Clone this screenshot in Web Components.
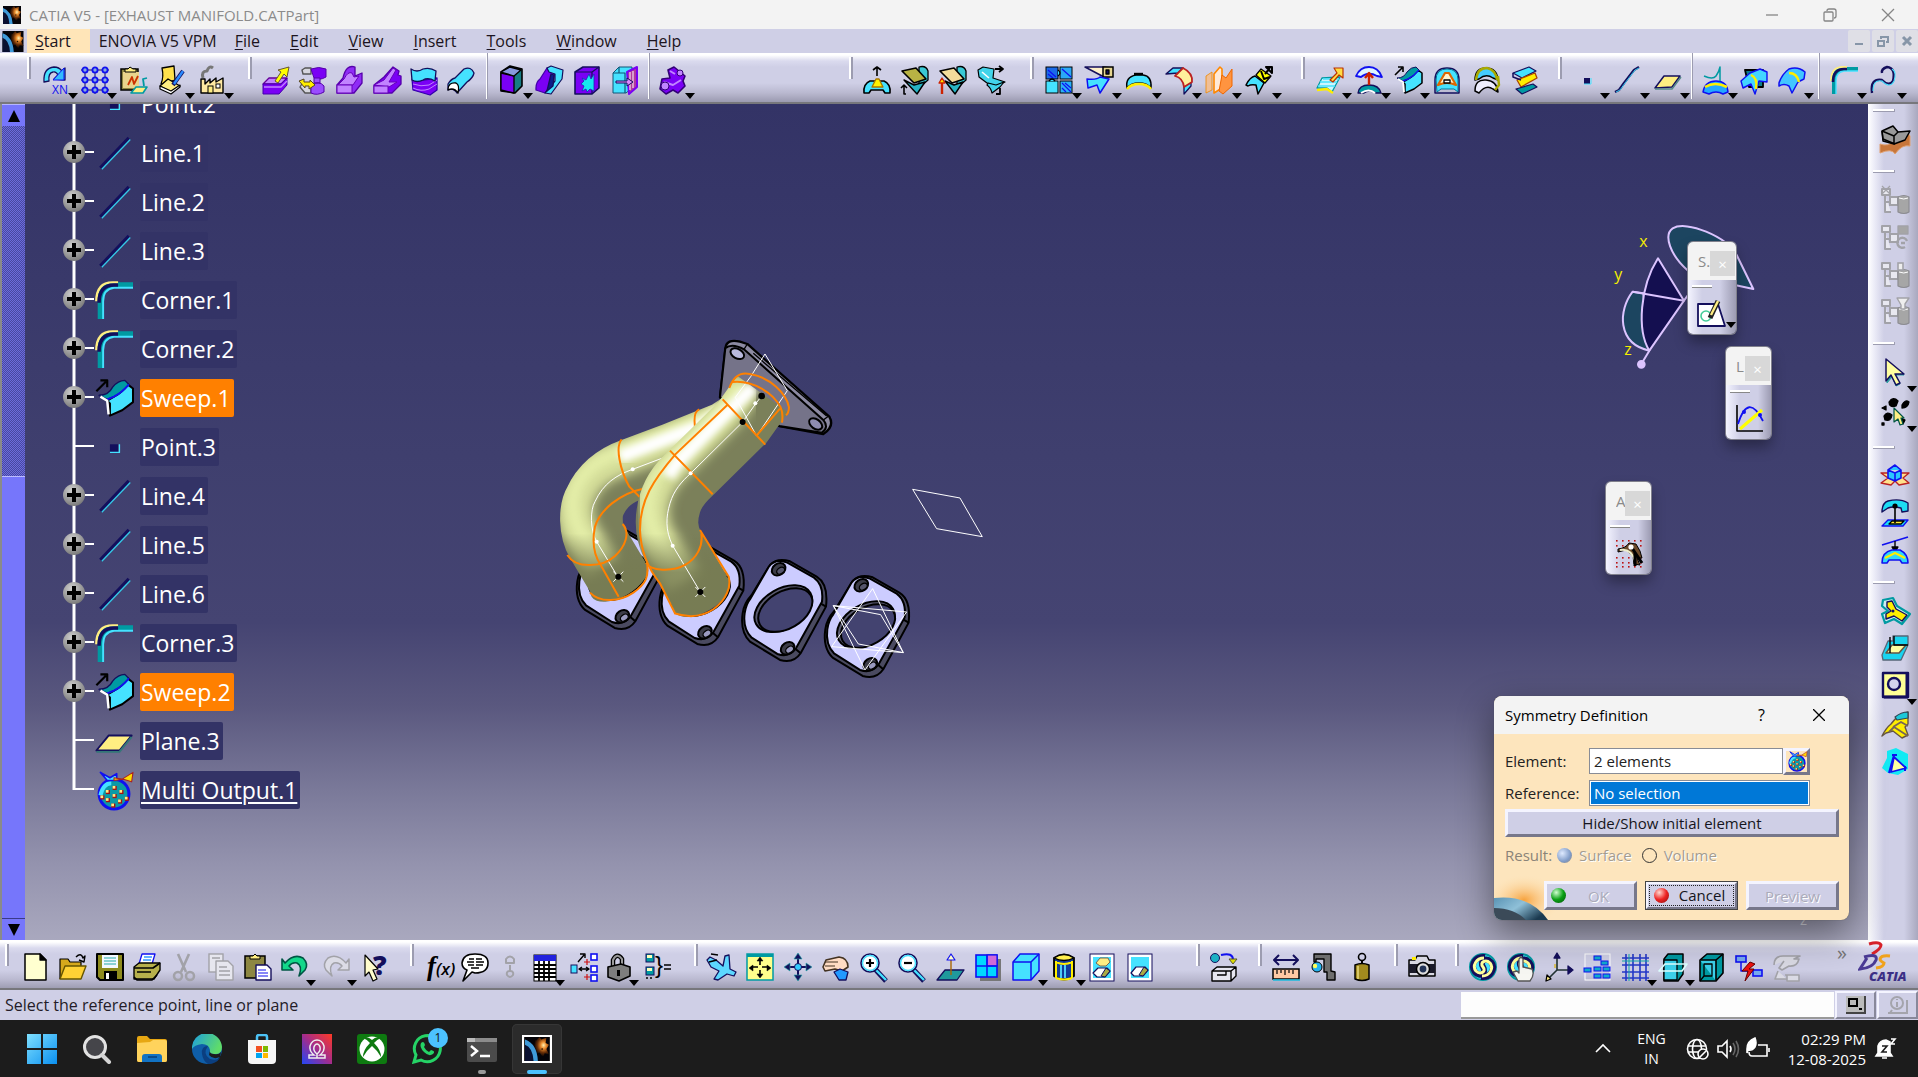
<!DOCTYPE html>
<html lang="en">
<head>
<meta charset="utf-8">
<title>CATIA V5 - [EXHAUST MANIFOLD.CATPart]</title>
<style>
  html, body { margin: 0; height: 100%; }
  body { font-family: "Open Sans", "Noto Sans", sans-serif; font-size: 15px; overflow: hidden; }
</style>
</head>
<body>
<cad-app></cad-app>
<script>
/* ---------- icon drawing helpers ---------- */
const K = '#000', N = '#140f5c', C = '#45e2ff', T = '#009aa2', P = '#7a00f5', L = '#c184ff', Y = '#ffee82', B = '#1010f0', W = '#fff', G = '#a2a2a8';
const p = (d, f = 'none', s = K, w = 1.3) => `<path d="${d}" fill="${f}" stroke="${s}" stroke-width="${w}" stroke-linejoin="round"/>`;
const c = (x, y, r, f = 'none', s = 'none', w = 1) => `<circle cx="${x}" cy="${y}" r="${r}" fill="${f}" stroke="${s}" stroke-width="${w}"/>`;
const r = (x, y, w, h, f = 'none', s = 'none', sw = 1) => `<rect x="${x}" y="${y}" width="${w}" height="${h}" fill="${f}" stroke="${s}" stroke-width="${sw}"/>`;
const t = (x, y, z, s, f = K, st = '') => `<text x="${x}" y="${y}" font-size="${z}" fill="${f}" style="${st}">${s}</text>`;
const grid = (xs, ys, fn) => xs.map(x => ys.map(y => fn(x, y)).join('')).join('');

const tree0 = p('M1 3h8v6H1zM4 9v17h6M4 16h6', '#e8e8f0', G, 2) + r(9, 11, 8, 8, '#e8e8f0', G, 2);
const drum = p('M17 11q6-3 11 0v15q-5 3-11 0z', '#a6a6a6', '#8c8c92', 1.2) + p('M18 12q5 2 9 0', 'none', W, 1);
const spiral = c(14, 14, 13, C, T, 2) + p('M14 14C10 8 17 4 22 9C27 15 22 25 12 24M14 14C18 20 11 25 6 19C1 12 6 3 16 4', 'none', N, 6) + p('M14 14C10 9 17 6 21 10C25 15 21 23 13 23M14 14C18 19 11 22 7 18C3 13 7 5 15 5', 'none', '#ffff9c', 3);
const bag = c(14, 17, 11, '#0c9aa6', B, 2.2) + p('M4 18q2-9 8-9', 'none', C, 3) + p('M4 1l7 4 5-3v5h-7z', C, B, 1.2) + p('M14 5l6 1 8-5-1 7-6-2-7 1z', '#fd0', '#a22', .8) +
  [[9,15],[14,12],[19,15],[23,20],[14,18],[9,21],[18,22],[13,25],[5,19]].map(a => r(a[0]-1, a[1]-1, 3, 3, '#a11') + r(a[0]-1, a[1]-1, 2, 2, Y)).join('');
const magnifier = p('M15 16L26 28', 'none', N, 5) + p('M16 17L26 27', 'none', C, 2.4) + c(10, 10, 9, W, N, 1.6) + c(10, 10, 7.5, 'none', C, 1.4);

const ICONS = {
  rotateN: p('M2 16Q1 2 12 1Q17 1 20 5L23 2V14L12 13L16 9Q14 5 11 6Q6 7 7 15Z', C, N) + p('M22 2v12h-11z', '#3bf', B, 1) + t(10, 28, 12, 'XN', B),
  dotgrid: p('M4 1v27M14 1v27M24 1v27M0 4h28M0 14h28M0 24h28', 'none', N, 1) + grid([4, 14, 24], [4, 14, 24], (x, y) => c(x, y, 2.6, '#8ad', B, 1.8)),
  clip: r(1, 3, 17, 21, '#8f8742', K, 1.5) + r(3, 6, 16, 16, '#e9d48c') + p('M5 6v-3h3l2-2 3 2h3v3z', Y, K, 1) + p('M8 19l4-8 2 7 4-8', 'none', '#c30', 1.8) + p('M11 27l5-6h11l-4 6z', Y, T, 1.6) + p('M27 12l-4 1 1 7', 'none', T, 1.8),
  sketchpaper: p('M3 2l12-2 1 14-14 4q3-7 1-16z', '#ffe04c', K) + p('M1 20l8-7 12 7-9 6z', Y, K) + p('M1 20v3l11 5 9-7v-2l-9 6z', W, K, 1.2) + p('M24 5L14 19', 'none', N, 4) + p('M24 5L15 18', 'none', '#2a8aff', 2.4),
  factory: p('M3 13h4v5l5-5v4l6-5v4l7-4v15H3z', '#ffe9a2', K, 1.4) + r(10, 20, 5, 7, Y, K) + r(18, 18, 4, 4, W, K) + p('M5 12q-2-7 4-7 2-6 6-3', 'none', '#777', 3),
  extrude: p('M1 18l6-6h18l-6 6z', L, '#609') + p('M1 18v10h16l8-9v-7l-6 6z', P, '#40a', 1) + p('M2 21h17l6-6', 'none', L, 1.4) + p('M13 15l6-9-3-2 11-3-2 10-3-3-6 9z', '#ff0', '#653', 1),
  revolve: p('M3 4l3-2h6v6H4zM4 16l-3 5 5 6h6v-9', '#d6d6de', '#555', 1.4) + p('M12 3q8-3 15 0v8q-7 4-12 1z', P, '#50a', 1) + p('M15 12h6v5h-6zM12 19q8-5 13 1v6q-7 4-13 1z', '#9a4cff', '#50a', 1) + p('M0 15l5-2v3h6v-2l5 5-6 4v-3H6v2z', '#fe0', '#542', 1),
  pocket: p('M1 19l6-7q3-14 12-11v9l7-3v10l-8 10H1z', '#8f2cf6', '#50a') + p('M2 19l6-6q4-8 8-6l2 4 5-1-6 9z', L, '#60b', 1) + r(1, 19, 15, 8, L, '#60b'),
  slot: p('M1 19l10-8 9-10 6 4-1 4 3 1v8l-9 9H1z', P, '#50a') + p('M1 19l10-5L20 2l3 2-7 12h8l-8 5z', L, '#60b', 1) + r(1, 20, 14, 7, L, '#60b'),
  thick: p('M2 13l5 2 20-3v12l-7 5-17-5z', P, '#30a') + p('M3 18q8 3 16 1l8-5M3 22q8 4 16 1l8-5', 'none', L, 1) + p('M1 3q6 4 12 0 7-2 13 2l-1 10q-7-4-12-1-6 3-11 0z', C, N),
  closesurf: p('M1 18q3-5 7-6L17 3q7-3 10 4-1 5-7 9L10 27q-4-6-9-3z', C, N) + p('M1 24q0-8 8-7 4 2 2 10-4-6-10-3z', W, K),
  cube: p('M4 6l9-6 12 3v17l-7 7-14-2z', '#177c84', K, 1.6) + p('M4 7l13 3v17l-13-3z', P, K) + p('M4 6l9-5 11 3-7 6z', '#89d', K),
  shell: p('M1 22q0-6 4-9L12 2l8 2-2 14-8 9-9-3z', P, '#40a') + p('M12 2l4-2 12 4-1 9-11 15-6-1 10-12V8l-6-2z', C, N, 1.2) + p('M16 8l3 1-1 11-6 5z', '#0b1e8a', N),
  thickblock: p('M2 6l8-5h16v21l-7 6H2z', P, N, 1.6) + p('M2 6h17l7-5M19 6v22', 'none', N, 1.2) + p('M9 12l4 2 3-6 2 5 3-5v17l-4-2-3 3-1-3-4 2 2-5-3-2 3-3z', '#16e6ef', '#22b', .8),
  removeface: p('M2 7l6-6h13v21l-6 5H2z', C, '#157', 1) + p('M16 6l10-5v20l-8 7z', '#b03a9a', P, 2) + p('M19 6v18M22 5v17', 'none', W, 1) + p('M2 7h12v20M8 1v6', 'none', '#157', 1.2) + p('M5 15h11v-3l6 4-6 4v-3H5z', '#d8f', N, 1),
  bool: p('M3 13l8-1-2-8 6-3 5 4 6 5-2 5 2 5-7 7-5-3-7 4-6-5z', P, '#307', 1.6) + p('M11 5l5 3M5 16l9 3 8-5', 'none', L, 2) + c(21, 7, 3, L, '#307') + c(6, 20, 4, L, '#307'),
  draft: p('M1 27q-1-9 6-12h14q7 3 6 12h-5l-2-3H8l-2 3z', C, K, 1.6) + p('M9 21l4-8h3l4 8z', '#fff200', '#a70') + p('M14 10V1M10 4l4-3 4 3', 'none', K, 1.6),
  loft1: p('M18 1q7-2 9 4v9l-9 8z', '#39c8d4', K) + p('M1 5l14-3 10 11-12 4z', '#b7b244', K, 1.6) + p('M3 14l10 5 11-3-8 12z', '#27b4c4', K, 1.4) + p('M5 28H3v-8M0 22l3-3 3 3', 'none', K, 1.6),
  loft2: p('M18 1q7-2 9 4v9l-9 8z', '#39c8d4', K) + p('M1 5l14-3 10 11-12 4z', '#f2dc9b', K, 1.6) + p('M6 15l9 4 9-3-8 12z', '#27b4c4', K, 1.4) + p('M3 28V13', 'none', '#c20', 2.4) + p('M0 17l3-5 3 5z', '#fd0', '#c20'),
  loft3: p('M1 4l5-3 11 2-1 9 12 4-9 4-9-3-8-6z', '#42d4ea', K, 1.2) + p('M11 17l8 2 8-3-4 5-8 6q-1-5-5-8z', '#42d4ea', K, 1.2) + p('M5 6l7 6', 'none', W, 1.6) + p('M18 3h7M22 0l4 3-4 3M23 22v6h-4', 'none', K, 1.8),
  join4: r(1, 1, 12, 12, '#1a6ae8', K) + r(15, 1, 12, 12, '#2aa8f6', K) + r(1, 15, 12, 12, C, K) + r(15, 15, 12, 12, '#2ab0f8', K) + p('M3 4l8 7M3 8l5 4M17 3l9 8M17 17l9 9M17 22l4 4M20 17l6 5', 'none', B, 1.2) + p('M13 4q4 3 0 6M4 15q3-4 6 0', C, K),
  trim: p('M0 1h18l9 1v8l-8 1z', '#fff0c8', N, 1.5) + r(18, 1, 10, 10, '#e6d690', K, 1.5) + p('M21 4h3v4h-3z', N, K) + p('M2 13q10 1 13-2l9 2-9 14-3-8-9 3z', C, B, 1.5),
  extract: p('M2 22q-2-11 9-13h7q9 1 8 13-4-5-12-5t-12 5z', C, K, 1.5) + p('M2 23q4-5 12-5t12 5', 'none', '#fe0', 2.6) + p('M9 8h9', 'none', K, 2.4),
  fillet: p('M1 8l7-6h10l-5 5z', C, N, 1.5) + p('M19 20v8l7-8v-4z', C, N, 1.3) + p('M13 7l5-5q10 5 9 14l-8 5q-1-9-9-11z', '#ffef9c', '#b22', 1.8),
  symm: p('M1 10l6-4v18l-6 3z', '#f0bf96', '#e80', .8) + p('M9 8l6-7 2 2v19l-8 5z', '#ffe9d6', '#f80', 1.6) + p('M17 9l4 3 6-9v17l-9 8-4-3z', '#ff9440', '#e60', 1),
  extrap: p('M1 19q4-8 9-9l9 7-6 11-2-9q-5-1-8 1z', C, K, 1.5) + p('M11 9l5-6 10 7-6 7z', '#ff0', K, 1.2) + p('M16 5l3 8 6-2M20 8l5-6M21 1h6v6z', 'none', K, 2),
  surfext: p('M6 12l18-1-8 15-5-4-10 0z', '#cdf6ff', T) + p('M4 16h17M2 20h17M7 13h16', 'none', C, 1.5) + p('M1 24l10-1 6 4', 'none', '#fe0', 2.4) + p('M14 14l7-7-3-5h9v10l-4-3-6 7z', '#fd4', '#b30', 1.2),
  offset: p('M1 10q4-9 13-9t13 10l-5-1q-9-5-16 1z', '#dff6ff', B, 1.8) + p('M3 27q1-8 11-8t12 8l-5 0q-7-4-12 0z', T, N) + p('M6 27q8-5 14 0', 'none', W, 2) + p('M14 19V8M10 12l4-5 4 5', 'none', '#c20', 2.4),
  sweep: p('M9 16L14 13Q20 10 24 4L28 7V17L20 23L11 27V18Z', C, K, 1.5) + p('M3 12Q10 12 13 6Q17 1 22 1L25 4Q20 10 14 13L9 15Z', T, N, 1) + p('M9 15L14 13Q20 10 25 4', 'none', B, 1.4) + p('M1 9l7-7M4 1h5v5', 'none', K, 1.6) + p('M4 13l5 3 1 10', 'none', W, 1.8),
  fill: p('M2 14q0-12 12-12t12 12v13H2z', 'none', N, 1.5) + p('M3 14q0-11 11-11t11 11v12l-4-3H8l-4 3z', C, '#079', 1) + p('M5 19l7-12h4l7 12q-9-4-18 0z', '#fff4cc', '#d60', 2.2) + p('M11 14h6v3h-6z', W),
  multi: p('M3 14q0-12 11-12t12 12l-5-2q-7-5-14 1z', '#4cf', K, 1.5) + p('M3 25q0-12 11-11t12 12l-5-3q-7-5-14 4z', '#eef', K, 1.5) + p('M4 14Q5 2 15 2q9 2 10 12M26 10l1 9-4 5', 'none', '#aa0', 2.4),
  blend: p('M2 7l16-6 7 4-14 7z', C, N, 1.2) + p('M6 14l18-7 2 5-16 9z', '#ffef00', '#a40', 1.3) + p('M5 23l17-5 4 3-15 7z', T, N, 1.2) + p('M2 7v4l8 3', 'none', N, 1.5),
  point: r(11, 12, 6, 6, N) + p('M18 12v6h-7', 'none', C, 1),
  line: p('M2 26L6 24L11 17L21 4L26 1', 'none', N, 2.4) + p('M3 26L7 24L12 17L22 4L26 2', 'none', '#3ce', 1),
  plane: p('M2 22l9-12h16l-8 11z', '#ffee82', N, 1.5) + p('M2 23h17l9-12', 'none', '#588', 1.5),
  parsurf: p('M1 26q2-11 13-11t12 11l-5 2q-7-4-14 0z', '#23a9ff', B, 1.5) + p('M3 21q10-6 22 0', 'none', '#fe0', 2.6) + p('M2 10q9 4 12 0t4-9v14', 'none', T, 1.5),
  projn: p('M5 4h18v17H9z', '#0a7c8a', K, 1.8) + p('M1 15l9-8 10-4 7 3v10l-8-1-4 13-4-10-8 4z', '#42d6ff', B, 1.4) + p('M11 9q7 3 5 14', 'none', '#fe0', 2.4),
  combine: p('M1 17q3-9 10-14 9-3 16 3l-1 7-6 3-6 11-3-7q-5-3-10 0z', '#42c6ff', B, 1.5) + p('M11 7q8 0 10 9', 'none', '#fe0', 2.5),
  corner: p('M4 28V14Q4 4 13 3h15', 'none', T, 4) + p('M6 28V15Q6 6 14 5h14', 'none', C, 1.4) + p('M1 15Q1 1 13 1h4', 'none', Y, 1.8) + p('M3 16Q3 3 14 3h3', 'none', N, 2.6),
  spline: p('M2 27q-2-15 10-13 7 7 11 1 3-13-6-14-6 2-5 6', 'none', N, 2.4) + p('M3 25q0-12 9-10 8 8 12 0 3-9-2-12', 'none', C, 1.1),
  newdoc: p('M3 1h15l6 6v20H3z', '#ffffd0', K, 1.5) + p('M18 1v6h6z', K, K),
  open: p('M1 26V6h8l2 3h11v5', '#d6a91c', K, 1.2) + p('M1 26l5-13h21l-5 13z', '#ffd235', '#650', 1.4) + p('M17 4q5-5 7 1l2-2-1 6-5-2', 'none', K, 1.4),
  save: p('M1 1h26v26H4l-3-3z', '#8f8c1e', K, 2) + r(6, 2, 16, 13, '#f4f8ff') + p('M8 5h12M8 8h12M8 11h12', 'none', '#2aa', 1.2) + r(8, 18, 13, 9, K) + r(10, 20, 3, 6, W),
  print: p('M9 1h13l-3 10H6z', W, B, 1.3) + p('M11 4h8M10 7h8', 'none', '#39f', 1.5) + p('M1 14l5-4h17l4 0v7l-6 9H1z', '#b6b04c', K, 1.4) + p('M1 15h19l7-5M4 19h14M1 24l3 3h15l5-5', 'none', K, 1.6),
  cut: p('M8 1l8 18M19 1l-8 18', 'none', G, 2.6) + c(8, 23, 4, 'none', G, 2.5) + c(20, 23, 4, 'none', G, 2.5),
  copy: r(2, 1, 14, 18, '#e6e6ee', G, 1.4) + p('M9 8h12l5 5v14H9z', '#e6e6ee', G, 1.4) + p('M5 5h8M12 14h8M12 18h11M12 22h11', 'none', G, 1.4),
  paste: r(1, 3, 20, 22, '#8d8742', K, 1.5) + p('M6 6v-3h3l2-2 2 2h3v3z', Y, K, 1) + p('M12 12h11l4 4v11H12z', W, N, 1.4) + p('M14 17h8M14 20h10M14 23h10', 'none', B, 1.2),
  undo: p('M1 6l3 4Q13 0 22 5q6 6 2 12l-6 6q4-10-2-13-5-1-8 3l4 4H1z', '#12d88a', '#054', 1.6),
  redo: p('M27 6l-3 4Q15 0 6 5q-6 6-2 12l6 6q-4-10 2-13 5-1 8 3l-4 4h11z', '#dcdce6', G, 1.5),
  whats: t(10, 22, 27, '?', N, 'font-weight:800') + p('M2 2l13 14-5 1 4 9-4 2-4-9-4 4z', '#fffccc', K, 1.2),
  fx: t(1, 22, 27, 'f', K, 'font-style:italic;font-family:Liberation Serif;font-weight:bold') + t(10, 22, 17, '(x)', K, 'font-style:italic;font-weight:600'),
  comment: p('M14 1q13 0 13 9 0 10-13 10l-3-1-9 9 4-11q-5-2-5-7 1-9 13-9z', W, K, 1.6) + p('M8 6h5M15 6h6M6 9h7M15 9h8M7 12h6M15 12h7M10 15h8', 'none', K, 1.5),
  link: p('M10 10V6q4-5 8 0v4zM14 12v6M14 18q-4 0-3 4 3 4 6 0 1-4-3-4', 'none', G, 2),
  table: r(3, 2, 22, 26, W, K) + r(3, 2, 22, 6, '#22d') + p('M3 12h22M3 16h22M3 20h22M3 24h22M8 8v20M13 8v20M18 8v20', 'none', K, 1.8),
  diagram: r(1, 12, 6, 8, C, N) + [1, 13, 22].map(y => r(21, y, 6, 6, W, B, 1.6)).join('') + p('M9 16h10M8 9l6-7M10 1h5v4M12 14l-3 2 3 2M16 14l3 2-3 2', 'none', K, 1.4) + p('M14 9h6M17 6v6M14 24h6M17 21v6', 'none', '#c11', 1.2),
  lock: p('M8 14V7q4-8 9-1v7', 'none', K, 4.5) + p('M8 14V7q4-8 9-1v7', 'none', '#999', 2) + p('M3 14l13-3 9 3v9l-11 5-11-4z', '#7e7e7e', K, 1.6) + r(12, 17, 3, 6, K),
  braces: r(2, 1, 8, 8, T, N) + r(2, 14, 8, 8, T, N) + r(3, 2, 5, 3, '#ffb') + r(3, 15, 5, 3, '#ffb') + t(11, 20, 24, '}', K, 'font-family:Liberation Sans') + p('M20 12h7M20 16h7', 'none', K, 1.4) + p('M2 25h2M6 25h2', 'none', K, 1.5),
  fly: p('M2 4l6 3 7 6 2-10 4-1 1 14 6 3-2 4-7-2-9 6-4-1 5-8-8-4-4-7z', '#5cd8ff', N, 1.3) + p('M3 1l7 1M1 9l8-2', 'none', K, 1.6),
  fit: r(1, 1, 26, 26, '#ffff8c', T, 1.5) + r(1, 1, 26, 3, T) + p('M14 12V6M14 17v6M12 14H5M16 14h7', 'none', K, 1.6) + p('M11 8l3-4 3 4zM11 21l3 4 3-4zM7 12l-4 3 4 3zM21 12l4 3-4 3z', K, K, .5),
  pan: p('M14 3v22M3 14h22', 'none', N, 2) + p('M10 6l4-6 4 6zM10 22l4 6 4-6zM6 10l-6 4 6 4zM22 10l6 4-6 4z', N, '#2aa', .6) + c(14, 14, 3.5, '#3cf', N),
  rotate: p('M1 14l3-7 13-3q9 1 9 10l-6 4-7-2-10 2z', '#ffdcc4', '#432', 1.6) + p('M3 9h13M3 13h10', 'none', '#432', 1.2) + p('M12 19l6-3 8 3-2 8-7 0z', '#29f', N, 1.3),
  zoomin: magnifier + p('M6 10h8M10 6v8', 'none', K, 2.2),
  zoomout: magnifier + p('M6 10h8', 'none', K, 2.2),
  normal: p('M1 27l8-10h19l-7 10z', '#1f9a9c', N, 1.3) + p('M15 22V6', 'none', '#a60', 1.4) + p('M11 7l4-6 4 6z', '#ffc', B, 1.2),
  views: r(6, 6, 21, 22, '#777') + r(2, 2, 21, 22, '#00d8ff', B, 1.6) + r(13, 2, 10, 11, '#d06ad8', B, 1.2) + p('M13 2v22M2 13h21', 'none', B, 1.5),
  iso: p('M1 9l7-8h19v17l-8 9H1z', C, B, 1.5) + p('M1 9h18v18M19 9l8-8', 'none', B, 1.5),
  shade: p('M4 5q10-7 20 0v18q-10 7-20 0z', '#123a9a', K, 1.8) + p('M4 5q10-7 20 0-10 5-20 0z', '#ffef4d', K) + p('M6 8v17M22 8v17M6 25q8 3 16 0M6 9q8 4 16 0', 'none', '#fe0', 2) + p('M11 12v13M15 12v13', 'none', '#5df', 1.8),
  hide: r(2, 1, 24, 27, W, N) + r(5, 4, 18, 21, C) + p('M8 10l4-5h8l2 4-4 4h-6z', Y, '#765', 1) + p('M5 20l5-5h9l3 3-5 6h-8z', W, N, 1.2) + p('M13 23l5-8 4 3-5 6z', '#aa4', N, 1),
  swap: r(2, 1, 24, 27, W, N) + r(5, 4, 18, 21, C) + p('M5 20l5-6h9l3 3-5 6H8z', W, N, 1.2) + p('M13 22l5-8 4 3-5 6z', '#aa4', N, 1),
  tobox: c(5, 5, 4.5, '#1bb0c4', N) + p('M11 2q12-3 12 5', 'none', B, 2) + p('M19 6h8l-4 5z', '#dd0', '#553', 1) + p('M2 18l5-4h19v9l-5 5H2zM2 18h19v10M21 18l5-4M7 22h9v-4', '#e6e6f0', K, 1.4),
  ruler: p('M3 7h22M7 2L2 7l5 5M21 2l5 5-5 5', 'none', N, 2) + r(1, 16, 26, 10, '#ffc9a4', K, 1.5) + p('M5 17v4M9 17v3M13 17v5M17 17v3M21 17v4', 'none', K, 1.2) + p('M1 27h27', 'none', '#2bd', 1.6),
  caliper: p('M4 1h17v17l4 1v8h-8v-8h-3V6h-8v3H4z', '#6e6e6e', K, 1.4) + c(7, 14, 5, '#25b4f0', K) + c(5, 13, 2.2, '#ff5'),
  weight: c(14, 4, 3.5, 'none', K, 1.6) + r(13, 7, 2, 4, K) + p('M7 12q7-3 14 0v14q-7 3-14 0z', '#a28b1e', K, 1.5) + p('M10 13v13', 'none', '#d8c766', 2),
  camera: p('M1 7h6l2-4h10l2 4h6v16H1z', '#d8d8e2', K, 1.5) + r(1, 11, 26, 9, '#1a1a28') + c(15, 16, 6.5, '#ddd', K, 1.5) + c(15, 16, 3.4, '#235') + r(4, 4, 4, 3, '#fe0'),
  update: spiral,
  manual: spiral + p('M11 28l-5-9 4-1 2 2V6q2-3 4 0v8l9 2q3 6-2 12z', '#f6f6f2', '#555', 1.3),
  axis: p('M12 17V3M12 17h13M12 17L3 26', 'none', '#233', 1.6) + p('M9 5l3-5 3 5zM23 13l5 4-5 4z', N, N) + p('M1 28l1-6 4 4z', Y, K) + p('M10 15v-4', 'none', '#db3', 1.5),
  works: r(2, 1, 25, 26, 'none', W, 1) + [[11, 3], [18, 8], [1, 15], [11, 14], [20, 14], [11, 21], [20, 21]].map(a => r(a[0], a[1], 7, 4, '#1ac', B)).join(''),
  snap: p('M5 1v27M12 1v27M19 1v27M25 1v27M1 5h27M1 12h27M1 19h27M1 25h27', 'none', '#2438c8', 1.6) + p('M8 1v27M1 8h27', 'none', '#1aa', 1),
  section: p('M5 6l4-5h15v20l-5 7H5z', T, K, 1.5) + p('M5 7h13v20H5z', '#3cd0ea', K) + p('M0 18l6-7h22l-5 7z', 'none', '#dff', 1.6),
  wirebox: p('M3 7l7-6h16v19l-7 8H3z', T, K, 1.6) + p('M3 7h16v21M19 7l7-6', '#3cd0ea', K, 1.6) + p('M7 11h8v12H7zM3 28l4-5', 'none', K, 1.3),
  pwrcut: r(1, 3, 10, 6, '#7ae', B, 1.6) + r(18, 17, 9, 6, '#7ae', B, 1.6) + p('M6 9v9h11', 'none', B, 1.5) + p('M15 9l-8 9h6l-3 10 9-12h-5l6-5z', '#e11', '#600', 1),
  handopen: p('M1 12q0-9 9-9h17l-6 3h5q-2 8-10 7l-7 4-3-2 5-7M5 18l-3 8h12M12 22h14v6H14v-6', '#dadae4', G, 1.6),
  wing: p('M-1 19q8 3 14-3l14-8 2 3v10q-8-2-15 8-3-6-15-1z', '#c8763a', '#e0a070', 1) + p('M1 6l11-5 5 6 12-1-5 9-11 4-11-3z', '#9a9a9a', K, 1.5) + p('M1 6l1 8 12 5M1 6l12 5 4-4M13 11v7', 'none', K, 1.5),
  t1: tree0 + drum + p('M1 0l8 8M9 0l-8 8', 'none', G, 1.2), t2: tree0 + p('M17 3h10v8H17z', '#a6a6a6', G) + p('M26 18a5 5 0 1 0-2 6M20 20h4', 'none', G, 2.4),
  t3: tree0 + drum + r(17, 3, 5, 7, '#eee', G, 1.6), t4: tree0 + drum + p('M16 1h12l-4 6v5h-4V8z', '#eee', G, 1.4),
  cursor: p('M6 3v22l5-6 4 9 4-2-4-9h8z', '#2aa0a0', '#2aa0a0', 1) + p('M5 1v22l5-6 5 10 4-2-5-9h9z', '#ffffa0', N, 1.5),
  lasso: p('M8 4q4-6 9-1l-2 5q-7 2-7-4zM21 7q3-6 7-3-1 6-7 6zM3 18q3-5 8-1-1 7-7 5zM1 10l4-2v4zM20 20l4 2-2 4zM1 25h2v2H1z', K, K) + p('M13 10v14l4-3 2 6 3-1-2-6h3z', Y, '#054', 1.2),
  assy: p('M0 11h28l-6 5 6 5-10 2-4-4-4 4-10-2 7-5z', '#ffe18c', '#b22', 1.4) + p('M7 8l7-5 6 5v8l-6 3-7-3zM7 8l7 3 6-3M14 11v8', '#2bc6ff', B, 1.6),
  thickarrow: p('M1 13q0-9 6-11 12-3 20 2v8l-6 1-1-4q-8-2-13 0z', '#1cdcf4', N, 1.4) + p('M1 27l6-6h20l-5 6z', '#1cdcf4', B, 1.4) + p('M8 25l3-3h12l-3 3z', '#fe3') + p('M14 6v18', 'none', K, 1.6) + c(14, 7, 2.6, K),
  proj2: p('M1 9L27 1', 'none', B, 1.8) + p('M14 5v10', 'none', K, 1.4) + p('M11 11l3 5 3-5z', K, K) + p('M1 27q0-11 10-13h8q8 4 8 13H21l-2-3H8l-2 3z', '#30d8f8', B, 1.5) + p('M4 22l10-5 10 5', 'none', '#fe0', 2),
  nest: p('M2 3l10-2 4 8 13 8-8 10-8-5-9 4-3-9 6-3-6-5z', '#cdeff4', T, 2.2) + p('M6 5l5-1 4 8 11 6-5 6-8-5-8 3v-5l5-3-4-4z', '#ffef00', N, 1.4) + c(12, 14, 1.5, N),
  box3: p('M1 21l6-14h5V2h15v9l-7 15H2z', '#18d4f0', '#567', 1.3) + p('M5 19l6-8h14l-7 8z', '#ffffa0', '#654', 1.5) + p('M9 3v16M27 11H13V2', 'none', K, 1.4),
  hole: p('M2 2h25v24H2z', '#ffff96', N, 2.4) + p('M26 3v22M3 26h24', 'none', N, 3) + c(13, 13, 6, '#d4d4ee', N, 2.4),
  pat: p('M1 25q4-8 9-12 6-9 17-12v12l-3 3 3 8-6 3-9-7-7 2z', '#ffef00', '#654', 1.4) + p('M14 6q6-5 13-5v6l-11 2z', '#1cc8d8', '#345', 1.2) + p('M12 16l8-5 7 4M8 21l5-5 14 9', 'none', '#765', 1.8),
  tri: p('M1 20l5-10V3l9-3 12 6v15l-10 6-10-2z', '#12eaf4', 'none') + p('M13 9l12 11-15 4z', '#ffffa0', B, 1.8) + p('M13 7L8 25M11 7h5M24 18v5', 'none', B, 2),
  pad: p('M1 5h20l7 22H1z', W, N, 1.8) + c(9, 17, 5, 'none', '#4c9', 1.6) + p('M21 2L13 19', 'none', '#222', 5) + p('M21 2l-7 14', 'none', Y, 2.4),
  law: p('M2 1v26h26', 'none', K, 1.6) + p('M3 20Q13-12 28 17', 'none', B, 1.8) + p('M5 25L27 6', 'none', '#ff0', 3) + c(9, 8, 2, B) + c(25, 11, 2, B),
  apply: grid([1, 7, 13, 19, 25], [1, 6, 18, 23, 27], (x, y) => r(x, y, 1.6, 1.6, '#b11')) + p('M3 10q8-1 11-6l7 1 4 7 2 7-5 0 3 7-6-1-1-8-7-6-8 2z', '#6b4a2a', K, 1) + p('M5 11q11-2 15 11', 'none', '#eec', 2) + p('M17 9l10 15M20 13v14', 'none', K, 3) + c(16, 8, 2.6, W),
  bag,
  treeline: p('M4 25L25 3', 'none', N, 2.6) + p('M5 26L26 4', 'none', '#35c9e6', 1),
  treeplane: p('M1 21l9-11h17l-9 11z', Y, N, 1.4) + p('M1 22h17l9-11', 'none', '#377', 1.4)
};

const LOGO = `<svg viewBox="0 0 28 28" width="100%" height="100%"><defs><radialGradient id="s" cx=".68" cy=".4" r=".55"><stop offset="0" stop-color="#fff1b0"/><stop offset=".3" stop-color="#e98a2c"/><stop offset=".65" stop-color="#6a3008"/><stop offset="1" stop-color="#080304"/></radialGradient></defs><rect width="28" height="28" fill="#040308"/><path d="M10 0l3 4 4-4 2 3 6-2-1 6 4 2-3 5 3 6-5-1-2 5-4-6-5 2-4-10z" fill="url(#s)"/><path d="M0 3Q14 8 15 28H0z" fill="#0a1030"/><path d="M0 3Q14 8 15 28h-5Q9 12 0 9z" fill="#3f9ad8"/><circle cx="20" cy="14" r="1" fill="#210"/></svg>`;

const define = (name, html, setup) => customElements.define(name, class extends HTMLElement {
  connectedCallback() {
    if (this.shadowRoot) return;
    const tpl = document.createElement('template');
    tpl.innerHTML = typeof html === 'function' ? html(this) : html;
    this.attachShadow({ mode: 'open' }).append(tpl.content.cloneNode(true));
    if (setup) setup(this, this.shadowRoot);
  }
});

/* ---------- small parts ---------- */
define('cad-icon', el => `<style>:host{display:block;width:28px;height:28px}svg{display:block;width:100%;height:100%;overflow:visible}text{font-family:"Open Sans",sans-serif}</style>
  ${el.getAttribute('name') === 'logo' ? LOGO : `<svg viewBox="0 0 28 28">${ICONS[el.getAttribute('name')] || ''}</svg>`}`);

define('tool-button', el => `<style>
  :host{display:block;flex:none;width:var(--cell,38px);height:var(--cellh,48px)}
  :host([drop]){margin:var(--dropm,0)}
  button{position:relative;box-sizing:border-box;width:100%;height:100%;padding:var(--padt,5px) 0 0;border:0;background:none;display:grid;place-items:center}
  i{position:absolute;right:-3px;bottom:var(--dropb,2px);border:5px solid transparent;border-top:6px solid #000;border-bottom:0}
  </style><button type="button" aria-label="${el.getAttribute('icon')}"><cad-icon name="${el.getAttribute('icon')}"></cad-icon>${el.hasAttribute('drop') ? '<i></i>' : ''}</button>`);

define('tool-group', el => `<style>
  :host{display:flex;min-width:0;flex:${el.getAttribute('span')} 1 0;--cell:${el.getAttribute('cell') || 38}px}
  span{flex:none;width:2px;height:22px;margin:4px 5px 0 0;background:#fff;border-right:2px solid #9c9cb0}
  :host([thin]) span{width:1px;border-width:1px;height:46px;margin:0 4px 0 0}
  :host([extra]){--dropm:0 4px 0 0}
  :host([extra]) span{margin-right:8px}
  </style><span></span><slot></slot>`);

define('tool-bar', `<style>
  :host{display:flex;box-sizing:border-box;height:51px;border-bottom:2px solid #77777c;overflow:hidden;
    background:linear-gradient(#fff 0,#fff 2px,#dadaee 8px,#cfcfe6 14px,#cfcfe6 30px,#b9b8cf 40px,#9b9ab0 49px)}
  </style><slot></slot>`);

define('side-group', `<style>:host{display:block;padding-bottom:14px;--cell:38px;--cellh:37px;--dropm:0 0 3px;--dropb:-3px;--padt:3px}
  span{display:block;width:21px;height:2px;background:#fff;border-bottom:1px solid #9c9cb0;border-right:1px solid #9c9cb0;margin-bottom:7px}
  ::slotted(*){margin-left:3px!important}</style><span></span><slot></slot>`);

define('side-bar', `<style>:host{display:block;width:45px;padding:5px 0 0 5px;height:100%;box-sizing:border-box;
  background:linear-gradient(90deg,#fff 0,#ededf8 6px,#cfcfe6 16px,#cfcfe6 36px,#a9a8be 50px)}</style><slot></slot>`);

/* ---------- title and menu ---------- */
define('title-bar', `<style>
  :host{display:flex;align-items:center;height:29px;background:#f3f3f3;color:#8b8b8b}
  cad-icon{width:18px;height:18px;margin:0 8px 0 3px}
  h1{font:inherit;margin:0;flex:1}
  button{width:58px;height:29px;border:0;background:none;padding:0 2px 0 0;display:grid;place-items:center}
  svg{width:14px;height:14px;fill:none;stroke:#858585;stroke-width:1.3px}
  </style><cad-icon name="logo"></cad-icon><h1>CATIA V5 - [EXHAUST MANIFOLD.CATPart]</h1>
  <button aria-label="Minimize"><svg viewBox="0 0 14 14"><path d="M1 7h12"/></svg></button>
  <button aria-label="Restore"><svg viewBox="0 0 14 14"><rect x="1" y="4" width="9" height="9" rx="1"/><path d="M4 3q0-2 2-2h5q2 0 2 2v5q0 2-2 2"/></svg></button>
  <button aria-label="Close"><svg viewBox="0 0 14 14"><path d="M1 1l12 12M13 1L1 13"/></svg></button>`);

define('menu-bar', `<style>
  :host{display:flex;align-items:stretch;height:24px;background:#cfcfe6;color:#1c1420}
  cad-icon{width:24px;height:21px;margin:2px 2px 0 1px}
  button{font:16px/24px "Open Sans","Noto Sans",sans-serif;color:inherit;border:0;background:none;padding:0 15px;white-space:nowrap}
  .start{background:#ffe5b8;padding:0 19px 0 8px}.eno{padding:0 3px 0 9px}
  u{text-underline-offset:2px}
  .sp{flex:1}
  .mdi{width:22px;margin:1px 0 1px 2px;padding:0;background:#dfdfe6;border-radius:2px;display:grid;place-items:center}
  svg{width:12px;height:12px;fill:none;stroke:#8796a8;stroke-width:2px}
  </style><cad-icon name="logo"></cad-icon>
  <button class="start"><u>S</u>tart</button><button class="eno">ENOVIA V5 VPM</button>
  <button><u>F</u>ile</button><button><u>E</u>dit</button><button><u>V</u>iew</button><button><u>I</u>nsert</button><button><u>T</u>ools</button><button><u>W</u>indow</button><button><u>H</u>elp</button>
  <span class="sp"></span>
  <button class="mdi" aria-label="Minimize document"><svg viewBox="0 0 12 12"><path d="M2 9h8"/></svg></button>
  <button class="mdi" aria-label="Restore document"><svg viewBox="0 0 12 12"><path d="M1 6h6v5H1zM4 4V2h7v5H9"/></svg></button>
  <button class="mdi" aria-label="Close document"><svg viewBox="0 0 12 12"><path d="M2 2l8 8M10 2l-8 8" stroke-width="3"/></svg></button>`);

/* ---------- specification tree ---------- */
define('scroll-rail', `<style>
  :host{display:flex;flex-direction:column;width:23px;border-left:2px solid #8a8a8a;background:#7676fb}
  button{height:22px;padding:0;border:0;border-top:1px solid #b5b5ff;background:#7676fb;display:grid;place-items:center}
  .dn{border-top-color:#3a3a88}
  svg{width:14px;height:12px}
  .track{flex:350;background:repeating-conic-gradient(#4848a0 0 25%,#6c6cdc 0 50%) 0 0/2px 2px}
  .thumb{flex:442;border-top:1px solid #bcbcff}
  </style><button aria-label="Scroll up"><svg viewBox="0 0 14 12"><path d="M7 0l6 12H1z"/></svg></button>
  <div class="track"></div><div class="thumb"></div>
  <button class="dn" aria-label="Scroll down"><svg viewBox="0 0 14 12"><path d="M7 12l6-12H1z"/></svg></button>`);

define('tree-node', el => {
  const plus = el.hasAttribute('plus'), last = el.hasAttribute('last');
  return `<style>
  :host{display:flex;align-items:center;height:49px;color:#fff}
  svg{flex:none;width:32px;height:49px;display:block}
  cad-icon{width:38px;height:38px;flex:none}
  .lb{line-height:38px;height:38px;padding:0 3px 0 1px;margin-left:7px;border-radius:2px;background:#333366;font-size:23px;white-space:nowrap}
  :host([hot]) .lb{background:#ff8000}
  :host([last]) .lb{text-decoration:underline;text-decoration-thickness:2px;text-underline-offset:3px}
  </style><svg viewBox="0 0 32 49"><defs><radialGradient id="g" cx=".4" cy=".3" r=".8"><stop offset="0" stop-color="#d0d0d0"/><stop offset="1" stop-color="#707070"/></radialGradient></defs>
  <path d="M11 0v${last ? 25 : 49}" stroke="#fff" stroke-width="3"/><path d="M11 24h20" stroke="#fff" stroke-width="2"/>
  ${plus ? '<circle cx="11" cy="24" r="11" fill="url(#g)"/><path d="M11 17v14M4 24h14" stroke="#000" stroke-width="4"/>' : ''}</svg>
  <cad-icon name="${el.getAttribute('icon')}"></cad-icon><span class="lb"><slot></slot></span>`;
});

define('spec-tree', `<style>:host{display:block;padding-left:38px;margin-top:-25px;position:relative}</style>
  <tree-node icon="point">Point.2</tree-node>
  <tree-node icon="treeline" plus>Line.1</tree-node><tree-node icon="treeline" plus>Line.2</tree-node><tree-node icon="treeline" plus>Line.3</tree-node>
  <tree-node icon="corner" plus>Corner.1</tree-node><tree-node icon="corner" plus>Corner.2</tree-node>
  <tree-node icon="sweep" plus hot>Sweep.1</tree-node><tree-node icon="point">Point.3</tree-node>
  <tree-node icon="treeline" plus>Line.4</tree-node><tree-node icon="treeline" plus>Line.5</tree-node><tree-node icon="treeline" plus>Line.6</tree-node>
  <tree-node icon="corner" plus>Corner.3</tree-node><tree-node icon="sweep" plus hot>Sweep.2</tree-node>
  <tree-node icon="treeplane">Plane.3</tree-node><tree-node icon="bag" last>Multi Output.1</tree-node>`);

/* ---------- 3D scene ---------- */
const backC = 'M236 775L170 665C150 630 150 570 165 545C190 490 230 465 278 448L400 402L560 338L608 306';
const frontC = 'M481 816L398 677C375 630 378 590 390 550C402 510 425 485 452 460L608 306L668 222';
const pipe = (id, d, hi, end) => `
  <mask id="${id}" maskUnits="userSpaceOnUse" x="0" y="0" width="1380" height="1110"><path d="${d}" fill="none" stroke="#fff" stroke-width="188"/>${end.replace('FILL', '#fff')}</mask>
  <g mask="url(#${id})"><rect width="1380" height="1110" fill="#7b805a"/>
  <path d="${d}" transform="translate(-50 -30)" fill="none" stroke="#d3dc98" stroke-width="112" filter="url(#b1)"/>
  <path d="${d}" transform="translate(-56 -44)" fill="none" stroke="#f0fbb4" stroke-width="36" filter="url(#b1)" opacity=".7"/>
  <path d="${hi}" fill="none" stroke="#ffffff" stroke-width="40" filter="url(#b2)"/>
  <rect x="0" y="640" width="1380" height="470" fill="url(#dk)"/></g>`;
const star = (x, y) => `<path d="M${x-15} ${y-15}l30 30M${x+15} ${y-15}l-30 30" stroke="#fff" stroke-width="3"/><circle cx="${x}" cy="${y}" r="9"/>`;

define('model-view', `<style>:host{display:block;min-height:0}svg{display:block;width:100%;height:100%}text{font-family:"Open Sans",sans-serif}</style>
<svg viewBox="25 104 1843 836" role="img" aria-label="Exhaust manifold">
 <defs>
  <filter id="b1"><feGaussianBlur stdDeviation="16"/></filter><filter id="b2"><feGaussianBlur stdDeviation="10"/></filter>
  <linearGradient id="dk" x2="0" y2="1"><stop offset="0" stop-color="#6f744e" stop-opacity="0"/><stop offset=".25" stop-color="#767b52" stop-opacity=".8"/></linearGradient>
  <g id="flange" stroke="#000" stroke-width="6" stroke-linejoin="round">
   <path d="M690 735Q712 712 750 724L830 770Q866 792 858 860L782 1000Q760 1032 720 1020L630 965Q600 935 608 880Q612 850 635 825Z" fill="#4a4a60"/>
   <path d="M686 741Q706 714 742 728L822 773Q852 795 846 845L768 985Q748 1014 712 1002L634 952Q608 925 614 880Q618 852 632 835Z" fill="#ccccff"/>
   <path d="M858 860l-14-8M782 1000l-16-14" fill="none"/>
   <ellipse cx="730" cy="866" rx="94" ry="60" transform="rotate(-30 730 866)" fill="#5a5a70"/>
   <ellipse cx="736" cy="870" rx="88" ry="56" transform="rotate(-30 736 870)" fill="#434370"/>
   <ellipse cx="716" cy="748" rx="22" ry="17" transform="rotate(-35 716 748)" fill="#3c3c48"/><ellipse cx="722" cy="752" rx="13" ry="9" transform="rotate(-35 722 752)" fill="#55556c" stroke-width="4"/>
   <ellipse cx="743" cy="985" rx="22" ry="17" transform="rotate(-35 743 985)" fill="#3c3c48"/><ellipse cx="749" cy="989" rx="13" ry="9" transform="rotate(-35 749 989)" fill="#9a9ac0" stroke-width="4"/>
  </g>
 </defs>
 <g transform="translate(540 320) scale(.3333)">
  <path d="M556 85Q560 55 600 65L622 72L868 290Q885 320 850 342L718 318L540 232Z" fill="#8c8aa2" stroke="#000" stroke-width="7" stroke-linejoin="round"/>
  <path d="M556 85Q575 68 612 88L850 300Q868 322 846 338L718 318L540 232Z" fill="#757389" stroke="#000" stroke-width="6"/>
  <path d="M612 88l10-16M850 300l16-12M640 100L860 288" stroke="#000" stroke-width="4" fill="none"/>
  <ellipse cx="592" cy="101" rx="22" ry="14" transform="rotate(28 592 101)" fill="#b9b9dd" stroke="#000" stroke-width="6"/>
  <ellipse cx="827" cy="312" rx="22" ry="14" transform="rotate(35 827 312)" fill="#8e8cb0" stroke="#000" stroke-width="6"/>
  <use href="#flange" x="-496" y="-96"/><use href="#flange" x="-248" y="-48"/><use href="#flange"/><use href="#flange" x="248" y="48"/>
  ${pipe('m1', backC, 'M240 410L330 376L480 318L600 240', '<ellipse cx="238" cy="782" rx="96" ry="48" transform="rotate(-30 238 782)" fill="FILL"/>')}
  <g fill="none" stroke="#fff" stroke-width="3"><path d="${backC}"/></g>
  <g fill="none" stroke="#ff8000" stroke-width="6">
   <path d="M245 358C225 380 240 450 268 500L300 532M478 268C458 275 462 310 468 342M310 506C240 520 180 570 165 620C155 670 165 710 182 735L236 830M248 612C272 640 255 680 225 708C190 740 110 750 82 705M150 818C180 850 240 845 280 818C320 790 325 770 322 735"/></g>
  ${star(235, 770)}
  ${pipe('m2', frontC, 'M385 470Q405 430 450 390L560 280L640 200', '<ellipse cx="484" cy="826" rx="96" ry="50" transform="rotate(-30 484 826)" fill="FILL"/>')}
  <g fill="none" stroke="#fff" stroke-width="3"><path d="M481 816L398 677C375 630 378 590 390 550C402 510 425 485 452 460L608 306L648 250L665 228"/>
   <path d="M675 102L632 170L586 232L650 348L742 212ZM1118 508L1260 534L1327 650L1190 626ZM880 857L1100 876L975 1050ZM998 806L1090 998L875 980ZM1022 884L880 857L955 972L1090 998Z"/></g>
  <g fill="none" stroke="#ff8000" stroke-width="6">
   <path d="M578 186C640 180 700 220 722 262C730 280 728 295 726 308M568 204C580 170 600 155 630 162C690 172 740 220 747 262Q746 280 738 286M548 238L676 374M562 255L406 403C340 480 300 540 300 630C302 690 320 740 360 790L405 880M390 392L518 523M720 266L652 344M484 640C490 680 470 715 435 735C400 755 330 755 318 728M480 630L566 770C574 800 560 840 520 868C480 895 440 892 403 880"/></g>
  ${star(481, 816)}<circle cx="665" cy="228" r="10"/><circle cx="608" cy="306" r="9"/>
  <g fill="#fff"><circle cx="398" cy="677" r="6"/><circle cx="170" cy="665" r="6"/><circle cx="278" cy="448" r="6"/><circle cx="452" cy="460" r="6"/><circle cx="646" cy="250" r="6"/></g>
 </g>
 <g transform="translate(1580 200) scale(.3333)" stroke="#dcc4ff" stroke-width="6" stroke-linejoin="round">
  <path d="M324 212C270 165 250 105 278 85C320 60 440 110 470 165L520 267L468 256Z" fill="#1c4560"/>
  <path d="M158 275C115 330 110 430 208 452L190 280Z" fill="#1c4560"/>
  <path d="M234 175C180 260 170 390 208 452L312 302Z" fill="#140f50"/>
  <path d="M158 275L312 302L324 285M208 452L184 492" fill="none"/><circle cx="184" cy="493" r="10" fill="#dcc4ff"/>
  <g fill="#f6ee00" stroke="none" font-size="48"><text x="178" y="141">x</text><text x="103" y="240">y</text><text x="133" y="466">z</text></g>
 </g>
 <text x="1800" y="925" font-size="15" fill="#e0e0ea">z</text>
</svg>`);

define('float-bar', el => `<style>
  :host{display:block;width:45px;border-radius:5px;overflow:hidden;box-shadow:0 0 0 1px #80808c,0 8px 14px rgba(0,0,0,.35);--cell:45px;--cellh:46px;--dropb:1px;--padt:13px}
  header{display:flex;height:38px;background:#f3f3f3;color:#8a8a8a;overflow:hidden;box-sizing:border-box;padding:9px 1px 0 10px}
  b{font-weight:400;flex:1;overflow:hidden;line-height:20px}
  header button{flex:none;width:25px;height:25px;padding:0;border:0;background:#d8d8d8;color:#fff;font:inherit;line-height:20px}
  .bd{height:54px;background:linear-gradient(90deg,#f4f4ff,#cfcfe6 14px,#cfcfe6 32px,#9c9bb2)}
  .bd i{display:block;width:20px;height:2px;margin:0 0 0 4px;background:#fff;border-bottom:1px solid #888;position:relative;top:5px}
  </style><header><b>${el.getAttribute('label')}</b><button aria-label="Close">×</button></header>
  <div class="bd"><i></i><slot></slot></div>`);

/* ---------- dialog ---------- */
define('symmetry-dialog', `<style>
  :host{display:block;width:355px;border-radius:8px;overflow:hidden;background:#fde5bd;color:#222;box-shadow:0 14px 36px rgba(0,0,0,.45),0 0 1px #555}
  header{height:38px;display:flex;align-items:center;background:#f3f3f3;padding:0 2px 0 11px;color:#000}
  h2{font:inherit;margin:0;flex:1}
  header button{width:57px;height:38px;border:0;padding:0;background:none;font:16px "Open Sans",sans-serif}
  header svg{width:12px;height:12px;stroke:#000;stroke-width:1.3px}
  form{padding:14px 10px 10px 11px;display:flex;flex-direction:column;position:relative}
  .row{display:flex;height:26px;align-items:center;margin-bottom:6px}
  .row label{width:84px}
  input[type=text]{box-sizing:border-box;height:26px;width:194px;min-width:0;border:2px solid #fff;outline:1px solid #888c96;outline-offset:-1px;padding:0 3px;font:inherit;background:#fff;color:#222}
  input.ref{width:221px;background:#0078d7;color:#fff}
  form .pick{width:27px;height:27px;padding:0;display:grid;place-items:center;background:#fde5bd}
  .pick cad-icon{width:20px;height:20px}
  form button{box-sizing:border-box;font:inherit;color:#151520;background:#cfcfe6;border:3px solid;border-color:#f4f4ff #77778a #77778a #f4f4ff}
  .wide{height:28px;line-height:20px;padding:0;margin-top:-3px}
  fieldset{border:0;margin:0;padding:8px 0 0;display:flex;align-items:center;height:30px;color:#a39c90;text-shadow:1px 1px #fff}
  .res{color:#8a8378;text-shadow:none;margin-right:5px}
  input[type=radio]{appearance:none;width:15px;height:15px;margin:0 7px 0 0;border:1px solid #333;border-radius:50%}
  input[type=radio]:checked{border:0;background:radial-gradient(circle at 35% 35%,#dfeaff,#7f9bc8 60%,#a08c70)}
  fieldset label{margin-right:10px}
  .act{display:flex;gap:8px;justify-content:flex-end;margin-top:6px}
  .act button{width:93px;height:29px;display:flex;align-items:center;justify-content:center;padding:0;position:relative;z-index:1}
  .act .ok{justify-content:flex-start;padding-left:4px}
  .act button:disabled{color:#ababba;text-shadow:1px 1px #fff}
  .ball{width:15px;height:15px;border-radius:50%;margin-right:22px;background:radial-gradient(circle at 35% 30%,#d0ffd0,#0aa015 50%,#045008)}
  .red{margin-right:10px;background:radial-gradient(circle at 35% 30%,#ffd8d0,#e22 50%,#801010)}
  .cancel{outline:1px solid #444;outline-offset:-1px}
  .cancel span{display:flex;align-items:center;border:1px dotted #222;padding:0 8px 0 4px;line-height:19px}
  .planet{position:absolute;left:0;bottom:0;width:70px;height:50px}
  </style>
  <header><h2>Symmetry Definition</h2><button aria-label="Help">?</button><button aria-label="Close"><svg viewBox="0 0 12 12"><path d="M0 0l12 12M12 0L0 12"/></svg></button></header>
  <form>
   <svg class="planet" viewBox="0 0 70 50"><defs><radialGradient id="o"><stop offset="0" stop-color="#f7a23c"/><stop offset="1" stop-color="#fde5bd" stop-opacity="0"/></radialGradient><linearGradient id="e" x1="0" y1="0" x2="1" y2=".6"><stop offset="0" stop-color="#5a93b4"/><stop offset=".5" stop-color="#8fc0d8"/><stop offset="1" stop-color="#1b3a50"/></linearGradient></defs>
   <ellipse cx="30" cy="30" rx="38" ry="26" fill="url(#o)"/><path d="M0 28Q36 24 54 50H0z" fill="url(#e)"/><path d="M0 38Q20 38 32 50H0z" fill="#3b4a58"/></svg>
   <div class="row"><label for="el">Element:</label><input type="text" id="el" value="2 elements"><button type="button" class="pick" aria-label="Selection list"><cad-icon name="bag"></cad-icon></button></div>
   <div class="row"><label for="ref">Reference:</label><input type="text" id="ref" class="ref" value="No selection"></div>
   <button type="button" class="wide">Hide/Show initial element</button>
   <fieldset disabled><span class="res">Result:</span><input type="radio" name="r" id="r1" checked><label for="r1">Surface</label><input type="radio" name="r" id="r2"><label for="r2">Volume</label></fieldset>
   <div class="act"><button type="button" class="ok" disabled><i class="ball"></i>OK</button><button type="button" class="cancel"><span><i class="ball red"></i>Cancel</span></button><button type="button" disabled>Preview</button></div>
  </form>`);

/* ---------- status bar and taskbar ---------- */
define('status-bar', `<style>
  :host{display:flex;align-items:center;height:30px;background:#cfcfe6;color:#241c28;padding-left:5px;font-size:16px}
  span{flex:1}
  input{width:373px;height:27px;box-sizing:border-box;border:0;border-bottom:2px solid #999;background:#fdfdfd;margin:0}
  button{box-sizing:border-box;width:41px;height:28px;margin-left:1px;padding:0;border:2px solid;border-color:#f4f4ff #88889a #88889a #f4f4ff;background:#cfcfe6}
  svg{width:20px;height:18px;display:block;margin:auto}
  </style><span>Select the reference point, line or plane</span><input type="text" aria-label="Power input">
  <button aria-label="Dialog"><svg viewBox="0 0 20 18"><path d="M0 0h20v18H0z" fill="#bbb"/><path d="M19 0v17H0" fill="none" stroke="#444" stroke-width="2"/><path d="M3 3h8v7H3z" fill="none" stroke="#000" stroke-width="2"/><path d="M13 12h3v2h-3z"/></svg></button>
  <button aria-label="Information"><svg viewBox="0 0 20 18"><g fill="none" stroke="#a4a4ac" stroke-width="2"><circle cx="9" cy="7" r="6"/><path d="M0 17h19V4M9 6v5M9 3v1M4 14l-2 3"/></g></svg></button>`);

const TASK = {
  win: '<defs><linearGradient id="a" x2="1" y2="1"><stop offset="0" stop-color="#7fe0ff"/><stop offset="1" stop-color="#0a8fef"/></linearGradient></defs><path d="M0 0h14v14H0zM16 0h14v14H16zM0 16h14v14H0zM16 16h14v14H16z" fill="url(#a)"/>',
  search: '<circle cx="13" cy="13" r="10.5" fill="#45454a" stroke="#e2e2e2" stroke-width="3"/><path d="M20 21l7 7" stroke="#d4d4d4" stroke-width="4" stroke-linecap="round"/>',
  folder: '<path d="M0 4q0-2 2-2h8l3 3h15q2 0 2 2v19q0 2-2 2H2q-2 0-2-2z" fill="#e7a712"/><path d="M0 9l13-1 3-2h12q2 0 2 2v18q0 2-2 2H2q-2 0-2-2z" fill="#ffd35c"/><path d="M5 28v-5q0-3 3-3h14q3 0 3 3v5z" fill="#1273c4"/><path d="M11 23h9" stroke="#0a4c8a" stroke-width="2"/>',
  edge: '<defs><linearGradient id="a" x1="0" x2="1" y2=".4"><stop offset="0" stop-color="#1b9de2"/><stop offset="1" stop-color="#5fdc6a"/></linearGradient></defs><circle cx="15" cy="15" r="15" fill="#0f5ea8"/><path d="M0 15A15 15 0 0 1 30 13Q30 21 22 20Q17 20 18 16Q17 10 10 10Q2 11 0 15z" fill="url(#a)"/><path d="M10 20Q9 12 16 12Q10 20 18 25Q24 27 28 24Q24 30 16 30Q11 27 10 20z" fill="#0b3f80"/><path d="M18 16Q17 20 22 20Q27 21 29 18L28 23Q21 26 17 21z" fill="#1c1c1c"/>',
  store: '<path d="M10 6V3q0-2 2-2h6q2 0 2 2v3" fill="none" stroke="#4cc2f5" stroke-width="2.5"/><path d="M1 6h28v20q0 4-4 4H5q-4 0-4-4z" fill="#f6f6f6"/><path d="M9 12h6v6H9z" fill="#f25022"/><path d="M16 12h5v6h-5z" fill="#7fba00"/><path d="M9 19h6v5H9z" fill="#00a4ef"/><path d="M16 19h5v5h-5z" fill="#ffb900"/>',
  gx: '<defs><linearGradient id="a" x1="0" y1="1" x2="1" y2="0"><stop offset="0" stop-color="#2347f5"/><stop offset=".5" stop-color="#a32c8c"/><stop offset="1" stop-color="#ff3a24"/></linearGradient></defs><path d="M0 0h30v30H0z" fill="url(#a)"/><path d="M7 21h5q-5-4-4-9 2-6 7-6t7 6q1 5-4 9h5v3h-8v-4q4-3 3-7-1-3-3-3t-3 3q-1 4 3 7v4H7z" fill="none" stroke="#eee" stroke-width="1.5"/>',
  xbox: '<rect width="30" height="30" rx="3" fill="#0e7a10"/><circle cx="15" cy="15" r="12.5" fill="#fff"/><path d="M6 4q5-2 9 2 4-4 9-2-5 2-7 5 7 7 7 14-4-7-9-11-5 4-9 11 0-7 7-14-2-3-7-5z" fill="#0e7a10"/>',
  wa: '<path d="M2 28l2-7A13 13 0 1 1 9 26z" fill="#1c1c1c" stroke="#25d366" stroke-width="3"/><path d="M9 9q3-3 4 2l-1 2q2 4 5 5l2-2q5 1 2 4-4 3-9-2-5-5-3-9z" fill="#25d366"/>',
  term: '<path d="M0 4h30v22q0 2-2 2H2q-2 0-2-2z" fill="#4b4b4b"/><path d="M0 4h30v4H0z" fill="#8c8c8c"/><path d="M0 4h8v4H0z" fill="#bbb"/><path d="M4 12l6 5-6 5M13 22h10" fill="none" stroke="#fff" stroke-width="2.5"/>'
};
define('task-item', el => `<style>
  :host{position:relative;display:grid;place-items:center;width:55px;height:50px}
  button{padding:0;border:0;background:none;width:50px;height:50px;display:grid;place-items:center;border-radius:5px}
  :host([active]) button{background:#2b2b2b;box-shadow:inset 0 0 0 1px #363636}
  svg.i{width:30px;height:30px}
  cad-icon{border:2px solid #fff;width:26px;height:24px}
  .n{position:absolute;left:29px;top:4px;width:20px;height:20px;border-radius:50%;background:#4cc2ff;color:#111;font-size:12px;line-height:20px;text-align:center}
  .u{position:absolute;bottom:0;left:50%;width:8px;margin-left:-4px;height:4px;border-radius:2px;background:#9a9a9a}
  :host([active]) .u{width:20px;margin-left:-10px;background:#4cc2ff}
  </style><button aria-label="${el.getAttribute('name')}">${el.getAttribute('name') === 'catia' ? '<cad-icon name="logo"></cad-icon>' : `<svg class="i" viewBox="0 0 30 30">${TASK[el.getAttribute('name')]}</svg>`}</button>
  ${el.hasAttribute('badge') ? `<span class="n">${el.getAttribute('badge')}</span>` : ''}${el.hasAttribute('run') ? '<span class="u"></span>' : ''}`);

define('task-bar', `<style>
  :host{display:flex;align-items:center;height:57px;background:#1c1c1c;color:#fff;padding:0 21px 0 14px;line-height:20px}
  .sp{flex:1}
  svg{width:24px;height:24px;fill:none;stroke:#fff;stroke-width:1.6px;margin-right:6px}
  .lang{text-align:center;margin:0 20px 0 16px;font-size:14px}
  .time{text-align:right;margin:0 7px 0 12px}
  svg.last{margin:0}
  </style>
  <task-item name="win"></task-item><task-item name="search"></task-item><task-item name="folder"></task-item><task-item name="edge"></task-item><task-item name="store"></task-item><task-item name="gx"></task-item><task-item name="xbox"></task-item><task-item name="wa" badge="1"></task-item><task-item name="term" run></task-item><task-item name="catia" active run></task-item>
  <span class="sp"></span>
  <svg viewBox="0 0 24 24"><path d="M5 15l7-7 7 7"/></svg>
  <div class="lang">ENG<br>IN</div>
  <svg viewBox="0 0 24 24"><circle cx="11" cy="12" r="9.5"/><ellipse cx="11" cy="12" rx="4.5" ry="9.5"/><path d="M2 9h18M2 15h12"/><circle cx="17" cy="17" r="5" fill="#1c1c1c"/><path d="M14 20l6-6"/></svg>
  <svg viewBox="0 0 24 24"><path d="M2 9h4l5-5v16l-5-5H2z"/><path d="M14 9q2 3 0 6"/><path d="M17 6q4 6 0 12M20 4q5 8 0 16" stroke="#666"/></svg>
  <svg viewBox="0 0 24 24"><path d="M12 8h9v11H6q-3 0-3-4M23 11v4"/><path d="M1 12q0-8 8-11 2 5 0 9-3 4-7 3l-1 3z" fill="#fff"/></svg>
  <div class="time">02:29 PM<br>12-08-2025</div>
  <svg class="last" viewBox="0 0 24 24"><path d="M3 19l2-3V9q2-6 8-6l4 2v11l2 3zM9 21h5" fill="#fff"/><path d="M9 9h5l-5 6h5" stroke="#1c1c1c"/><path d="M18 2h4l-4 5h4"/></svg>`);

/* ---------- application ---------- */
const btns = s => s.split(' ').map(n => n.endsWith('+') ? `<tool-button icon="${n.slice(0, -1)}" drop></tool-button>` : `<tool-button icon="${n}"></tool-button>`).join('');
const grp = (span, cell, names, attr = '') => `<tool-group span="${span}" cell="${cell}" ${attr}>${btns(names)}</tool-group>`;
const side = names => `<side-group>${btns(names)}</side-group>`;

define('cad-app', `<style>
  :host{position:relative;display:flex;flex-direction:column;height:100vh;min-width:0}
  .work{flex:1;min-height:0;display:flex;background:#cfcfe6}
  .view{flex:1;min-width:0;display:grid;position:relative;overflow:hidden;
    background:linear-gradient(#333366 0,#3f3f6e 42%,#454472 62%,#5a587f 72%,#7a7999 82%,#9493ae 91%,#a9a8be 100%)}
  .view>model-view,.view>spec-tree{grid-area:1/1}
  .view>model-view{height:100%}
  side-bar{box-sizing:content-box}
  .top{padding-left:27px}
  .bottom{height:50px;padding-left:5px}
  .more{flex:none;width:16px;color:#777;font-size:20px;line-height:26px}
  .ds{flex:none;width:56px;height:48px;margin:0 4px 0 5px}
  .f1,.f2,.f3,symmetry-dialog{position:absolute}
  .f1{right:132px;top:138px;width:48px}.f2{right:97px;top:243px}.f3{right:217px;top:378px}
  symmetry-dialog{right:69px;bottom:157px}
  </style>
  <title-bar></title-bar><menu-bar></menu-bar>
  <tool-bar class="top">
   ${grp(221, 39, 'rotateN+ dotgrid+ clip sketchpaper+ factory+')}${grp(238, 37, 'extrude revolve pocket slot thick closesurf')}
   ${grp(162, 38, 'cube+ shell thickblock removeface', 'thin')}${grp(201, 38, 'bool+', 'thin')}${grp(181, 38, 'draft loft1 loft2 loft3')}
   ${grp(271, 40, 'join4+ trim+ extract+ fillet+ symm+ extrap+')}${grp(257, 39, 'surfext+ offset+ sweep+ fill multi blend')}
   ${grp(133, 40, 'point+ line+ plane+')}${grp(127, 38, 'parsurf+ projn combine+', 'thin')}${grp(100, 40, 'corner+ spline+', 'thin')}
  </tool-bar>
  <div class="work">
   <scroll-rail></scroll-rail>
   <div class="view"><model-view></model-view><spec-tree></spec-tree>
    <float-bar class="f1" label="S."><tool-button icon="pad" drop></tool-button></float-bar>
    <float-bar class="f2" label="L"><tool-button icon="law"></tool-button></float-bar>
    <float-bar class="f3" label="A"><tool-button icon="apply"></tool-button></float-bar>
   </div>
   <side-bar>${side('wing')}${side('t1 t2 t3 t4')}${side('cursor+ lasso+')}${side('assy thickarrow proj2')}${side('nest box3 hole+ pat tri')}</side-bar>
  </div>
  <tool-bar class="bottom">
   ${grp(405, 37, 'newdoc open save print cut copy paste undo+ redo+ whats', 'extra')}${grp(284, 35, 'fx comment link table+ diagram lock+ braces', 'extra')}
   ${grp(502, 38, 'fly fit pan rotate zoomin zoomout normal views iso+ shade+ hide swap')}${grp(62, 38, 'tobox')}${grp(136, 38, 'ruler caliper weight')}${grp(61, 38, 'camera')}
   ${grp(382, 38, 'update manual axis works snap+ section+ wirebox pwrcut handopen')}
   <span class="more">»</span>
   <svg class="ds" viewBox="0 0 56 48" role="img" aria-label="CATIA"><path d="M11 4q10-3 12 1 0 4-9 9" fill="none" stroke="#d8232a" stroke-width="3"/><path d="M6 17q14-4 12 3-3 8-16 9l7-11" fill="none" stroke="#4a3a94" stroke-width="3"/><path d="M32 16q-9-1-10 3 0 2 4 4 0 4-8 5" fill="none" stroke="#f0a21c" stroke-width="3"/><text x="11" y="41" font-size="13" font-weight="800" font-style="italic" fill="#3b2f86" font-family="Open Sans">CATIA</text></svg>
  </tool-bar>
  <status-bar></status-bar><task-bar></task-bar>
  <symmetry-dialog></symmetry-dialog>`);
</script>
</body>
</html>
